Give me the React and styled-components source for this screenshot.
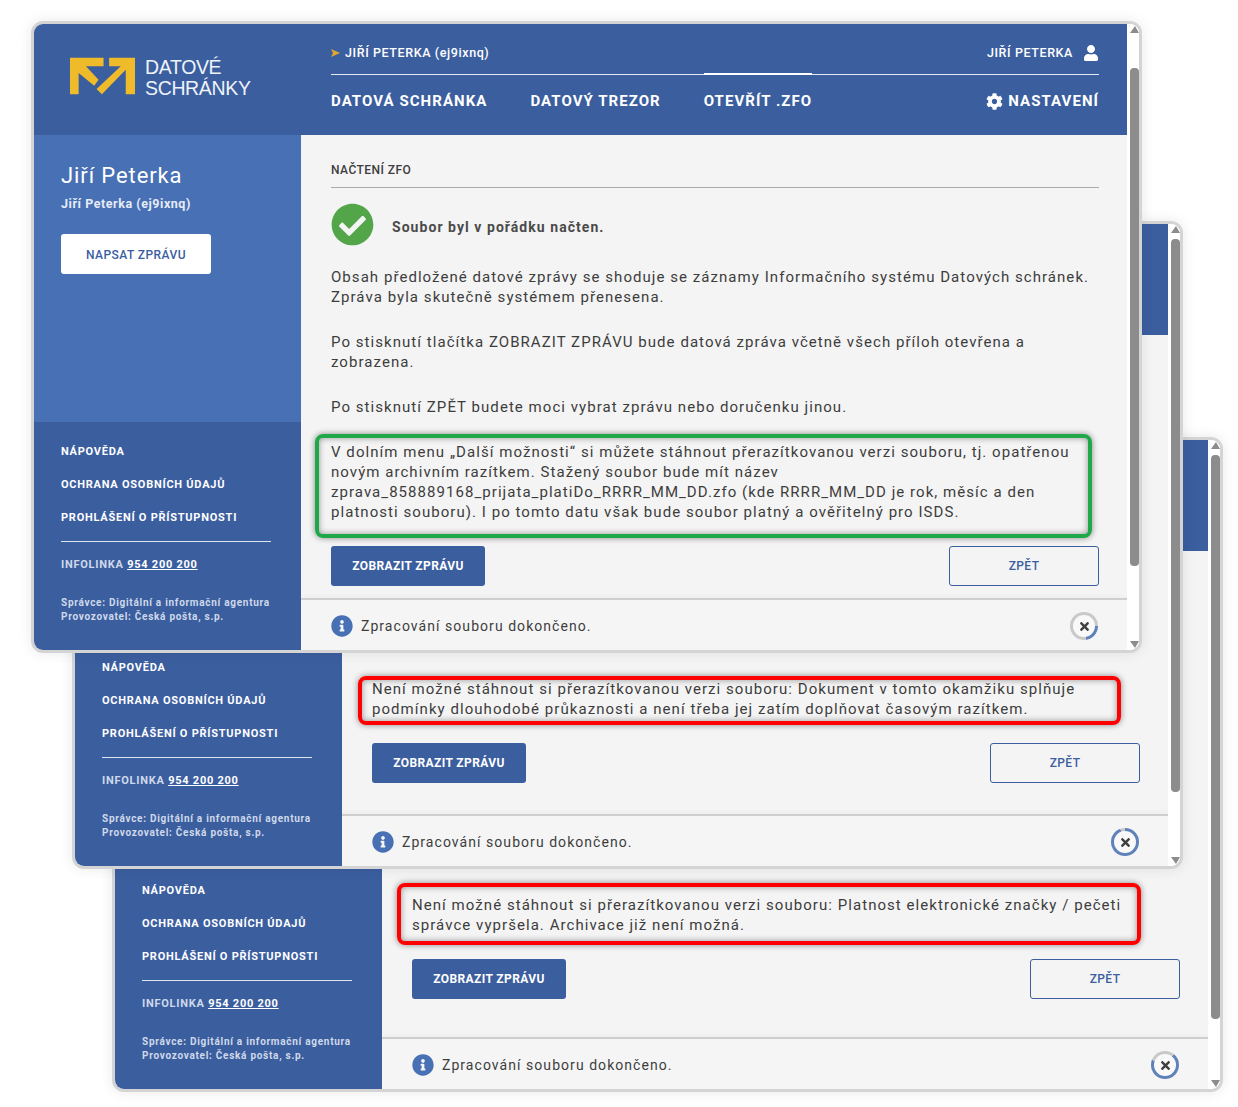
import React from 'react';
import styled, { createGlobalStyle } from 'styled-components';
import { FaCheckCircle, FaCog, FaInfoCircle, FaTimes, FaUser } from 'react-icons/fa';

const BLUE = '#3b5e9f';

const GlobalStyle = createGlobalStyle`
  html, body {
    margin: 0;
    background: #fff;
  }
  body {
    font-family: Roboto, "Liberation Sans", sans-serif;
    color: #3d3d3d;
  }
`;

const Canvas = styled.div`
  position: relative;
  width: 1238px;
  height: 1107px;
  overflow: hidden;
`;

const Window = styled.section`
  position: absolute;
  left: ${(p) => p.$left}px;
  top: ${(p) => p.$top}px;
  z-index: ${(p) => p.$z};
  box-sizing: border-box;
  width: 1111px;
  height: ${(p) => p.$height}px;
  display: flex;
  border: 3px solid #d4d4d4;
  border-radius: 12px;
  background: #fff;
  overflow: hidden;
  box-shadow: 0 0 14px rgba(0, 0, 0, 0.09);
`;

const Frame = styled.div`
  flex: 1;
  min-width: 0;
  display: flex;
  flex-direction: column;
`;

const Header = styled.header`
  flex: none;
  height: 111px;
  display: flex;
  background: ${BLUE};
  color: #fff;
`;

const LogoArea = styled.div`
  flex: none;
  width: 267px;
  box-sizing: border-box;
  padding: 33px 0 0 36px;
  display: flex;
  gap: 10px;
`;

const LogoText = styled.div`
  font-family: "Liberation Sans", Arial, sans-serif;
  font-size: 19.5px;
  line-height: 21px;
  letter-spacing: -0.35px;
  color: #eef2f9;
`;

const TopNav = styled.div`
  flex: 1;
  min-width: 0;
  padding: 0 28px 0 30px;
`;

const AccountRow = styled.div`
  height: 51px;
  box-sizing: border-box;
  padding-top: 7px;
  display: flex;
  align-items: center;
  justify-content: space-between;
  border-bottom: 1px solid #e4e9f2;
  font-size: 12.5px;
  font-weight: 500;
  letter-spacing: 0.6px;
`;

const Mailbox = styled.span`
  display: flex;
  align-items: center;
  gap: 5px;
`;

const UserName = styled.span`
  display: flex;
  align-items: center;
  gap: 10px;
`;

const MenuRow = styled.nav`
  display: flex;
  align-items: center;
  gap: 43px;
  height: 52px;
  font-size: 15px;
  font-weight: 700;
  letter-spacing: 1.05px;
`;

const MenuItem = styled.a`
  position: relative;
  white-space: nowrap;

  ${(p) =>
    p.$active &&
    `
    &::before {
      content: '';
      position: absolute;
      left: 0;
      right: 0;
      top: -19px;
      height: 2px;
      background: #fff;
    }
  `}
`;

const SettingsItem = styled.a`
  margin-left: auto;
  display: flex;
  align-items: center;
  gap: 5px;
`;

const Body = styled.div`
  flex: 1;
  min-height: 0;
  display: flex;
`;

const Sidebar = styled.aside`
  flex: none;
  width: 267px;
  display: flex;
  flex-direction: column;
  background: ${BLUE};
  color: #fff;
`;

const SidebarTop = styled.div`
  flex: 1;
  min-height: 0;
  padding: 28px 30px 0 27px;
  background: #4870b4;
`;

const AccountName = styled.h2`
  margin: 0;
  font-size: 22px;
  line-height: 26px;
  font-weight: 400;
  letter-spacing: 0.9px;
`;

const AccountId = styled.div`
  margin-top: 7px;
  font-size: 12.5px;
  line-height: 16px;
  font-weight: 700;
  letter-spacing: 0.55px;
  color: #e6ecf6;
`;

const WriteButton = styled.a`
  margin-top: 22px;
  width: 150px;
  height: 40px;
  padding-top: 1px;
  box-sizing: border-box;
  display: flex;
  align-items: center;
  justify-content: center;
  border-radius: 3px;
  background: #fff;
  color: ${BLUE};
  font-size: 12px;
  font-weight: 500;
  letter-spacing: 0.45px;
`;

const SidebarFooter = styled.div`
  flex: none;
  height: 228px;
  box-sizing: border-box;
  padding: 22px 30px 0 27px;
  font-size: 11px;
  font-weight: 700;
  letter-spacing: 0.75px;
`;

const FooterLink = styled.a`
  display: block;
  height: 33px;
  line-height: 16px;
`;

const FooterLine = styled.div`
  height: 1px;
  margin-top: -2px;
  background: #dfe5f0;
`;

const Hotline = styled.div`
  margin-top: 15px;
  line-height: 16px;
  color: #cfd9ea;

  a {
    color: #fff;
    text-decoration: underline;
  }
`;

const Operator = styled.div`
  margin-top: 23px;
  font-size: 10px;
  line-height: 14px;
  letter-spacing: 0.72px;
  color: #cfd9ea;
`;

const Main = styled.main`
  flex: 1;
  min-width: 0;
  display: flex;
  flex-direction: column;
  background: #f4f4f4;
`;

const Content = styled.div`
  flex: 1;
  min-height: 0;
  display: flex;
  flex-direction: column;
  justify-content: flex-end;
  padding: 0 28px ${(p) => p.$bottom}px 30px;
`;

const SectionTitle = styled.h3`
  margin: 0 0 17px;
  padding-bottom: 9px;
  border-bottom: 1px solid #ababab;
  font-size: 12px;
  line-height: 16px;
  font-weight: 500;
  letter-spacing: 0.45px;
`;

const Success = styled.div`
  display: flex;
  align-items: center;
  gap: 18px;
  margin-bottom: 19px;
  font-size: 14px;
  font-weight: 700;
  letter-spacing: 1.05px;
  color: #4a4a4a;

  svg {
    color: #52a548;
    font-size: 43px;
    transform: translateY(-2px);
  }
`;

const Paragraph = styled.p`
  margin: 0 0 25px;
  font-size: 15px;
  line-height: 20px;
  letter-spacing: 1.05px;
`;

const Highlight = styled.div`
  position: relative;
  margin-bottom: 24px;

  ${Paragraph} {
    margin: 0;
  }

  &::after {
    content: '';
    position: absolute;
    top: ${(p) => p.$inset[0]}px;
    right: ${(p) => p.$inset[1]}px;
    bottom: ${(p) => p.$inset[2]}px;
    left: ${(p) => p.$inset[3]}px;
    border: 4px solid ${(p) => p.$color};
    border-radius: 8px;
    box-shadow: 0 0 6px rgba(0, 0, 0, 0.45), inset 0 0 6px rgba(0, 0, 0, 0.4);
    pointer-events: none;
  }
`;

const Actions = styled.div`
  display: flex;
  justify-content: space-between;
`;

const PrimaryButton = styled.a`
  width: 154px;
  height: 40px;
  display: flex;
  align-items: center;
  justify-content: center;
  border-radius: 3px;
  background: ${BLUE};
  color: #fff;
  font-size: 12px;
  font-weight: 700;
  letter-spacing: 0.4px;
`;

const SecondaryButton = styled.a`
  width: 150px;
  height: 40px;
  box-sizing: border-box;
  display: flex;
  align-items: center;
  justify-content: center;
  border: 1px solid ${BLUE};
  border-radius: 3px;
  color: ${BLUE};
  font-size: 12px;
  font-weight: 500;
  letter-spacing: 0.4px;
`;

const StatusBar = styled.div`
  flex: none;
  height: 52px;
  box-sizing: border-box;
  display: flex;
  align-items: center;
  padding: 2px 29px 0 30px;
  border-top: 2px solid #cfcfcf;
  box-shadow: 0 -3px 3px rgba(0, 0, 0, 0.02);
  background: #f5f5f5;
  font-size: 14px;
  letter-spacing: 1.05px;

  > svg {
    color: #4870b4;
    font-size: 22px;
    margin-right: 8px;
  }
`;

const CloseRing = styled.div`
  margin-left: auto;
  width: 28px;
  height: 28px;
  display: flex;
  align-items: center;
  justify-content: center;
  border-radius: 50%;
  background: conic-gradient(${(p) => p.$stops});
`;

const CloseFace = styled.div`
  width: 22px;
  height: 22px;
  display: flex;
  align-items: center;
  justify-content: center;
  border-radius: 50%;
  background: #f9f9f9;
  color: #3f3f3f;
  font-size: 13px;
`;

const Scrollbar = styled.div`
  flex: none;
  width: 12px;
  display: flex;
  flex-direction: column;
  align-items: flex-end;
  background: #fff;
`;

const Arrow = styled.div`
  flex: none;
  width: 0;
  height: 0;
  margin: ${(p) => (p.$down ? 'auto 0 2px' : '2px 0 0')};
  border-left: 5px solid transparent;
  border-right: 4px solid transparent;
  ${(p) => (p.$down ? 'border-top' : 'border-bottom')}: 7px solid #8c8c8c;
`;

const Thumb = styled.div`
  flex: none;
  width: 9px;
  margin-top: ${(p) => p.$top}px;
  height: ${(p) => p.$size}px;
  border-radius: 4px;
  background: #8c8c8c;
`;

function Logo() {
  return (
    <svg width="65" height="38" viewBox="0 0 65.3 38" fill="#efbb2a">
      <path d="M0 .7H33.7V9.3H16L28.7 22.7 24.3 28.7 8.7 16V37.3H0Z" />
      <path d="M39.3 .7H65.3V37.3H56V12.7L32 37.3 26.7 32 51 9.3H39.3Z" />
    </svg>
  );
}

function Pointer() {
  return (
    <svg width="9" height="8" viewBox="0 0 9 8" fill="#e0a92e">
      <path d="M0 0 9 4 0 8 2 4Z" />
    </svg>
  );
}

function Footer() {
  return (
    <SidebarFooter>
      <FooterLink>NÁPOVĚDA</FooterLink>
      <FooterLink>OCHRANA OSOBNÍCH ÚDAJŮ</FooterLink>
      <FooterLink>PROHLÁŠENÍ O PŘÍSTUPNOSTI</FooterLink>
      <FooterLine />
      <Hotline>
        INFOLINKA <a>954 200 200</a>
      </Hotline>
      <Operator>
        Správce: Digitální a informační agentura
        <br />
        Provozovatel: Česká pošta, s.p.
      </Operator>
    </SidebarFooter>
  );
}

function Status({ stops }) {
  return (
    <StatusBar>
      <FaInfoCircle />
      Zpracování souboru dokončeno.
      <CloseRing $stops={stops}>
        <CloseFace>
          <FaTimes />
        </CloseFace>
      </CloseRing>
    </StatusBar>
  );
}

function Buttons() {
  return (
    <Actions>
      <PrimaryButton>ZOBRAZIT ZPRÁVU</PrimaryButton>
      <SecondaryButton>ZPĚT</SecondaryButton>
    </Actions>
  );
}

function Bar({ top, size }) {
  return (
    <Scrollbar>
      <Arrow />
      <Thumb $top={top} $size={size} />
      <Arrow $down />
    </Scrollbar>
  );
}

export default function App() {
  return (
    <Canvas>
      <GlobalStyle />

      <Window $left={31} $top={21} $height={632} $z={3}>
        <Frame>
          <Header>
            <LogoArea>
              <Logo />
              <LogoText>
                DATOVÉ
                <br />
                SCHRÁNKY
              </LogoText>
            </LogoArea>
            <TopNav>
              <AccountRow>
                <Mailbox>
                  <Pointer />
                  JIŘÍ PETERKA (ej9ixnq)
                </Mailbox>
                <UserName>
                  JIŘÍ PETERKA
                  <FaUser size={16} />
                </UserName>
              </AccountRow>
              <MenuRow>
                <MenuItem>DATOVÁ SCHRÁNKA</MenuItem>
                <MenuItem>DATOVÝ TREZOR</MenuItem>
                <MenuItem $active>OTEVŘÍT .ZFO</MenuItem>
                <SettingsItem>
                  <FaCog size={17} />
                  NASTAVENÍ
                </SettingsItem>
              </MenuRow>
            </TopNav>
          </Header>
          <Body>
            <Sidebar>
              <SidebarTop>
                <AccountName>Jiří Peterka</AccountName>
                <AccountId>Jiří Peterka (ej9ixnq)</AccountId>
                <WriteButton>NAPSAT ZPRÁVU</WriteButton>
              </SidebarTop>
              <Footer />
            </Sidebar>
            <Main>
              <Content $bottom={12}>
                <SectionTitle>NAČTENÍ ZFO</SectionTitle>
                <Success>
                  <FaCheckCircle />
                  Soubor byl v pořádku načten.
                </Success>
                <Paragraph>
                  Obsah předložené datové zprávy se shoduje se záznamy Informačního systému Datových schránek.
                  <br />
                  Zpráva byla skutečně systémem přenesena.
                </Paragraph>
                <Paragraph>
                  Po stisknutí tlačítka ZOBRAZIT ZPRÁVU bude datová zpráva včetně všech příloh otevřena a
                  <br />
                  zobrazena.
                </Paragraph>
                <Paragraph>Po stisknutí ZPĚT budete moci vybrat zprávu nebo doručenku jinou.</Paragraph>
                <Highlight $color="#1fa84a" $inset={[-8, 7, -16, -16]}>
                  <Paragraph>
                    V dolním menu „Další možnosti“ si můžete stáhnout přerazítkovanou verzi souboru, tj. opatřenou
                    <br />
                    novým archivním razítkem. Stažený soubor bude mít název
                    <br />
                    zprava_858889168_prijata_platiDo_RRRR_MM_DD.zfo (kde RRRR_MM_DD je rok, měsíc a den
                    <br />
                    platnosti souboru). I po tomto datu však bude soubor platný a ověřitelný pro ISDS.
                  </Paragraph>
                </Highlight>
                <Buttons />
              </Content>
              <Status stops="#c9c9c9 0 90deg, #5f82bb 90deg 170deg, #c9c9c9 170deg" />
            </Main>
          </Body>
        </Frame>
        <Bar top={35} size={498} />
      </Window>

      <Window $left={72} $top={221} $height={648} $z={2}>
        <Frame>
          <Header />
          <Body>
            <Sidebar>
              <SidebarTop />
              <Footer />
            </Sidebar>
            <Main>
              <Content $bottom={31}>
                <Highlight $color="#ff0000" $inset={[-3, 19, -6, -14]}>
                  <Paragraph>
                    Není možné stáhnout si přerazítkovanou verzi souboru: Dokument v tomto okamžiku splňuje
                    <br />
                    podmínky dlouhodobé průkaznosti a není třeba jej zatím doplňovat časovým razítkem.
                  </Paragraph>
                </Highlight>
                <Buttons />
              </Content>
              <Status stops="#5f82bb 0 340deg, #c9c9c9 340deg" />
            </Main>
          </Body>
        </Frame>
        <Bar top={6} size={553} />
      </Window>

      <Window $left={112} $top={437} $height={655} $z={1}>
        <Frame>
          <Header />
          <Body>
            <Sidebar>
              <SidebarTop />
              <Footer />
            </Sidebar>
            <Main>
              <Content $bottom={38}>
                <Highlight $color="#ff0000" $inset={[-12, 39, -10, -15]}>
                  <Paragraph>
                    Není možné stáhnout si přerazítkovanou verzi souboru: Platnost elektronické značky / pečeti
                    <br />
                    správce vypršela. Archivace již není možná.
                  </Paragraph>
                </Highlight>
                <Buttons />
              </Content>
              <Status stops="#c9c9c9 0 40deg, #5f82bb 40deg 290deg, #c9c9c9 290deg" />
            </Main>
          </Body>
        </Frame>
        <Bar top={6} size={564} />
      </Window>
    </Canvas>
  );
}
